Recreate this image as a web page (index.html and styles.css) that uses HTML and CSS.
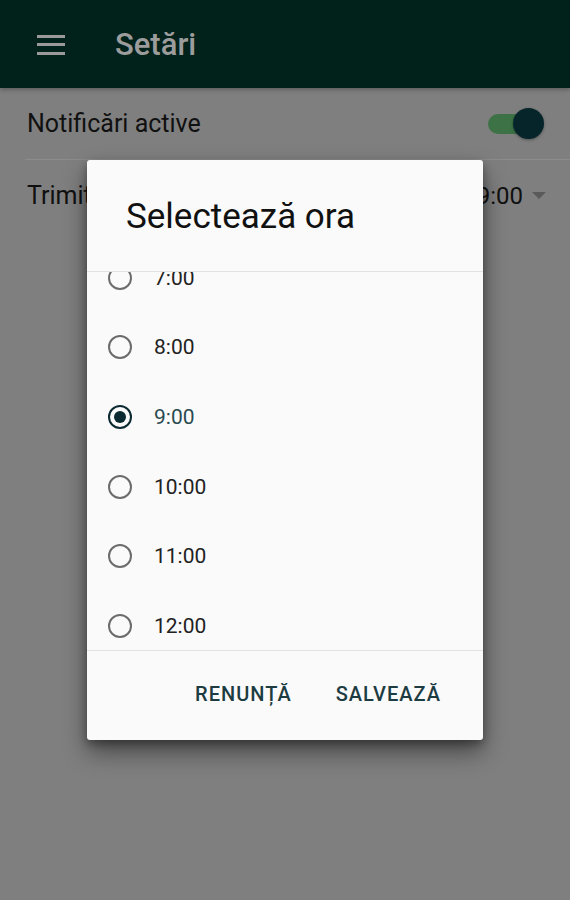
FILE: index.html
```html
<!DOCTYPE html>
<html lang="ro">

<head>
  <meta charset="UTF-8">
  <meta name="viewport" content="width=device-width, initial-scale=1.0">
  <title>Setări</title>
  <link rel="stylesheet" href="styles.css">
</head>

<body>
  <div id="app">
    <header class="toolbar">
      <div class="menu-icon">
        <span></span>
        <span></span>
        <span></span>
      </div>
      <h1 class="toolbar-title">Setări</h1>
    </header>

    <div class="settings">
      <div class="setting-row">
        <span class="setting-label">Notificări active</span>
        <div class="switch">
          <div class="switch-track"></div>
          <div class="switch-thumb"></div>
        </div>
      </div>
      <div class="setting-row">
        <span class="setting-label">Trimite notificarea la ora</span>
        <div class="select">
          <span class="select-value">9:00</span>
          <span class="select-arrow"></span>
        </div>
      </div>
    </div>
  </div>

  <!-- time picker dialog, sits over the dimmed page -->
  <div class="dialog">
    <h2 class="dialog-title">Selectează ora</h2>
    <div class="dialog-list">
      <ul class="options">
        <li class="option"><span class="radio"></span><span class="option-text">7:00</span></li>
        <li class="option"><span class="radio"></span><span class="option-text">8:00</span></li>
        <li class="option selected"><span class="radio"></span><span class="option-text">9:00</span></li>
        <li class="option"><span class="radio"></span><span class="option-text">10:00</span></li>
        <li class="option"><span class="radio"></span><span class="option-text">11:00</span></li>
        <li class="option"><span class="radio"></span><span class="option-text">12:00</span></li>
        <li class="option"><span class="radio"></span><span class="option-text">13:00</span></li>
      </ul>
    </div>
    <div class="dialog-actions">
      <button class="dialog-btn" type="button">Renunță</button>
      <button class="dialog-btn" type="button">Salvează</button>
    </div>
  </div>
</body>

</html>
```

FILE: styles.css
```css
body {
  margin: 0;
  background-color: #7f7f7f;
  font-family: Roboto, "Noto Sans", sans-serif;
  overflow: hidden;
}

#app {
  width: 570px;
  height: 900px;
}

.toolbar {
  display: flex;
  align-items: center;
  height: 88px;
  background-color: #01211b;
  box-shadow: 0 2px 4px rgba(0, 0, 0, 0.25);
}

.menu-icon {
  display: flex;
  flex-direction: column;
  justify-content: space-between;
  width: 28px;
  height: 20px;
  margin-left: 37px;
  margin-top: 1px;
}

.menu-icon span {
  display: block;
  height: 3px;
  background-color: #9a9a9a;
}

.toolbar-title {
  margin: 0 0 0 50px;
  font-size: 31px;
  font-weight: 500;
  color: #9c9c9c;
}

.settings {
  padding-left: 25px;
}

.setting-row {
  display: flex;
  align-items: center;
  justify-content: space-between;
  height: 71px;
  padding-right: 24px;
}

.setting-row:first-child {
  border-bottom: 1px solid #8c8c8c;
}

.setting-label {
  padding-left: 2px;
  font-size: 25px;
  color: #101010;
}

.switch {
  position: relative;
  width: 58px;
  height: 32px;
  margin-right: 2px;
}

.switch-track {
  position: absolute;
  left: 2px;
  top: 6px;
  width: 50px;
  height: 20px;
  border-radius: 10px;
  background-color: #3c7246;
}

.switch-thumb {
  position: absolute;
  right: 0;
  top: 0;
  width: 31px;
  height: 31px;
  border-radius: 50%;
  background-color: #06252b;
  box-shadow: 0 1px 3px rgba(0, 0, 0, 0.35);
}

.select {
  display: flex;
  align-items: center;
  gap: 9px;
}

.select-value {
  font-size: 24px;
  color: #101010;
}

.select-arrow {
  width: 0;
  height: 0;
  border-left: 7px solid transparent;
  border-right: 7px solid transparent;
  border-top: 7px solid #5a5a5a;
}

.dialog {
  position: absolute;
  left: 87px;
  top: 160px;
  width: 396px;
  height: 580px;
  display: flex;
  flex-direction: column;
  background-color: #fafafa;
  border-radius: 3px;
  box-shadow: 0 12px 24px rgba(0, 0, 0, 0.45), 0 4px 8px rgba(0, 0, 0, 0.3);
}

.dialog-title {
  margin: 0;
  height: 112px;
  padding-left: 39px;
  padding-top: 2px;
  box-sizing: border-box;
  display: flex;
  align-items: center;
  font-size: 35px;
  font-weight: 400;
  color: #111;
  border-bottom: 1px solid #e2e2e2;
}

.dialog-list {
  height: 378px;
  overflow: hidden;
  border-bottom: 1px solid #e2e2e2;
}

.options {
  list-style: none;
  margin: -29px 0 0 0;
  padding: 0;
}

.option {
  display: flex;
  align-items: center;
  gap: 22px;
  height: 69.6px;
  padding-left: 21px;
}

.radio {
  width: 20px;
  height: 20px;
  border: 2px solid #6c6c6c;
  border-radius: 50%;
  display: flex;
  align-items: center;
  justify-content: center;
}

.option-text {
  font-size: 21px;
  color: #222;
}

.option.selected .radio {
  border-color: #0b2a31;
}

.option.selected .radio::after {
  content: "";
  width: 12px;
  height: 12px;
  border-radius: 50%;
  background-color: #0b2a31;
}

.option.selected .option-text {
  color: #2a4a50;
}

.dialog-actions {
  flex: 1;
  display: flex;
  justify-content: flex-end;
  align-items: center;
  gap: 44px;
  padding-right: 42px;
  padding-bottom: 4px;
}

.dialog-btn {
  padding: 4px 0;
  border: none;
  background: none;
  font-family: Roboto, "Noto Sans", sans-serif;
  font-size: 20px;
  font-weight: 500;
  letter-spacing: 1px;
  line-height: 28px;
  text-transform: uppercase;
  color: #1d3c42;
}
```
